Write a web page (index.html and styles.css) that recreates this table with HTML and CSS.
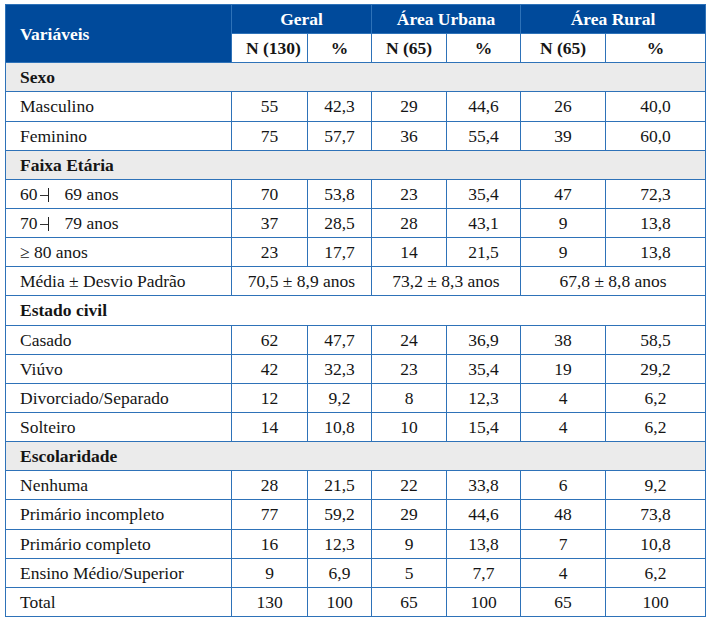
FILE: index.html
```html
<!DOCTYPE html>
<html lang="pt">
<head>
<meta charset="utf-8">
<link rel="stylesheet" href="styles.css">
</head>
<body>
<table class="tbl">
<colgroup>
<col class="c0"><col class="c1"><col class="c2"><col class="c3"><col class="c4"><col class="c5"><col class="c6">
</colgroup>
<thead>
<tr class="h1">
<th rowspan="2" class="var">Variáveis</th>
<th colspan="2">Geral</th>
<th colspan="2">Área Urbana</th>
<th colspan="2">Área Rural</th>
</tr>
<tr class="h2">
<th>N (130)</th><th>%</th><th>N (65)</th><th>%</th><th>N (65)</th><th>%</th>
</tr>
</thead>
<tbody>
<tr class="sec grey"><td colspan="7">Sexo</td></tr>
<tr><td>Masculino</td><td>55</td><td>42,3</td><td>29</td><td>44,6</td><td>26</td><td>40,0</td></tr>
<tr><td>Feminino</td><td>75</td><td>57,7</td><td>36</td><td>55,4</td><td>39</td><td>60,0</td></tr>
<tr class="sec grey"><td colspan="7">Faixa Etária</td></tr>
<tr><td>60<span class="rng" aria-label="┤"></span>69 anos</td><td>70</td><td>53,8</td><td>23</td><td>35,4</td><td>47</td><td>72,3</td></tr>
<tr><td>70<span class="rng" aria-label="┤"></span>79 anos</td><td>37</td><td>28,5</td><td>28</td><td>43,1</td><td>9</td><td>13,8</td></tr>
<tr><td>≥ 80 anos</td><td>23</td><td>17,7</td><td>14</td><td>21,5</td><td>9</td><td>13,8</td></tr>
<tr><td>Média ± Desvio Padrão</td><td colspan="2">70,5 ± 8,9 anos</td><td colspan="2">73,2 ± 8,3 anos</td><td colspan="2">67,8 ± 8,8 anos</td></tr>
<tr class="sec"><td colspan="7">Estado civil</td></tr>
<tr><td>Casado</td><td>62</td><td>47,7</td><td>24</td><td>36,9</td><td>38</td><td>58,5</td></tr>
<tr><td>Viúvo</td><td>42</td><td>32,3</td><td>23</td><td>35,4</td><td>19</td><td>29,2</td></tr>
<tr><td>Divorciado/Separado</td><td>12</td><td>9,2</td><td>8</td><td>12,3</td><td>4</td><td>6,2</td></tr>
<tr><td>Solteiro</td><td>14</td><td>10,8</td><td>10</td><td>15,4</td><td>4</td><td>6,2</td></tr>
<tr class="sec grey"><td colspan="7">Escolaridade</td></tr>
<tr><td>Nenhuma</td><td>28</td><td>21,5</td><td>22</td><td>33,8</td><td>6</td><td>9,2</td></tr>
<tr><td>Primário incompleto</td><td>77</td><td>59,2</td><td>29</td><td>44,6</td><td>48</td><td>73,8</td></tr>
<tr><td>Primário completo</td><td>16</td><td>12,3</td><td>9</td><td>13,8</td><td>7</td><td>10,8</td></tr>
<tr><td>Ensino Médio/Superior</td><td>9</td><td>6,9</td><td>5</td><td>7,7</td><td>4</td><td>6,2</td></tr>
<tr><td>Total</td><td>130</td><td>100</td><td>65</td><td>100</td><td>65</td><td>100</td></tr>
</tbody>
</table>
</body>
</html>
```

FILE: styles.css
```css
html, body {
  margin: 0;
  padding: 0;
  background: #ffffff;
}
body {
  padding: 4px 0 0 5px;
  font-family: "Liberation Serif", "Times New Roman", serif;
  font-size: 17.5px;
  color: #151515;
}
.tbl {
  border-collapse: collapse;
  table-layout: fixed;
  width: 700px;
}
.c0 { width: 226px; }
.c1 { width: 76px; }
.c2 { width: 64px; }
.c3 { width: 75px; }
.c4 { width: 74px; }
.c5 { width: 85px; }
.c6 { width: 100px; }
.tbl th, .tbl td {
  border: 1px solid #2e72b8;
  padding: 0 14px;
  height: 28.15px;
  line-height: 20px;
  text-align: center;
  white-space: nowrap;
}
.tbl td:first-child {
  text-align: left;
}
.h1 th {
  background: #004a9b;
  color: #ffffff;
  font-weight: bold;
}
.h1 th.var {
  text-align: left;
}
.h2 th {
  background: #ffffff;
  color: #151515;
  font-weight: bold;
}
.sec td {
  font-weight: bold;
}
.grey td {
  background: #ebebeb;
}
.rng {
  display: inline-block;
  width: 8px;
  height: 14px;
  margin: 0 16px 0 2px;
  vertical-align: -2px;
  border-right: 1.5px solid #222222;
  background: linear-gradient(#333333, #333333) no-repeat left 7px / 8px 1px;
}
```
